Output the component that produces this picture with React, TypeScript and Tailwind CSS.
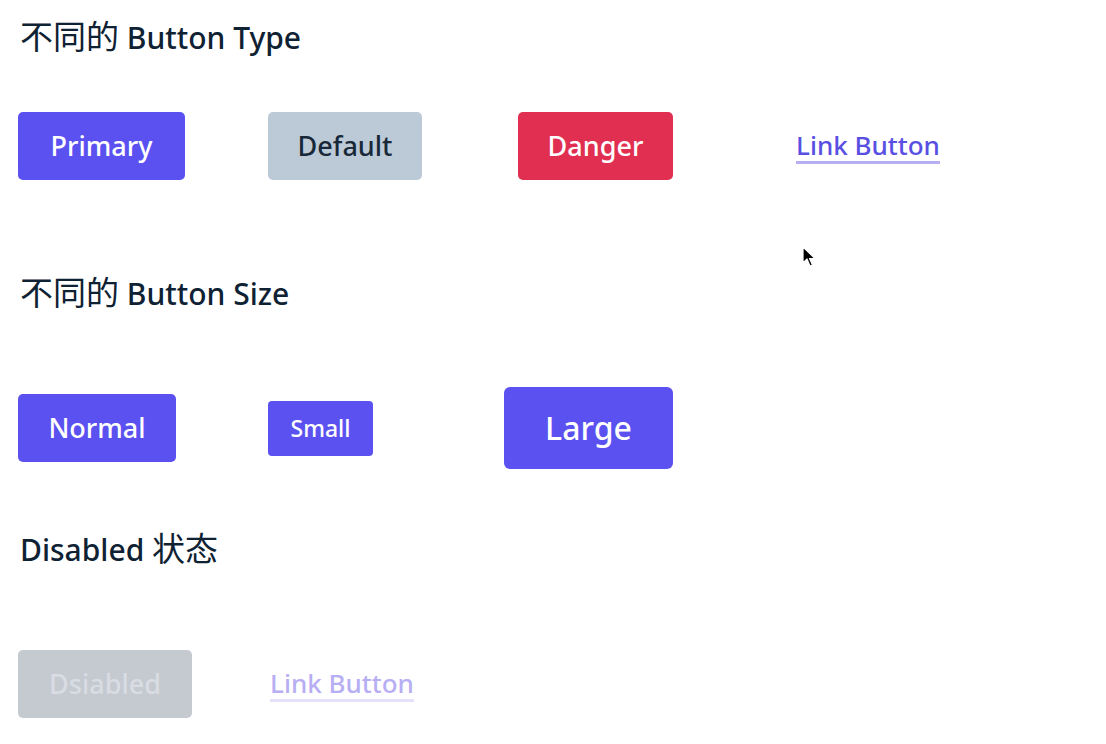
import React from 'react'

const font = { fontFamily: '"Noto Sans", "Noto Sans CJK SC", sans-serif' }

function Heading({ children }: { children: React.ReactNode }) {
  return <h2 className="text-[30px] leading-[36px] font-medium text-[#0f2233] pl-[20px]">{children}</h2>
}

// CJK glyphs render a bit wider in the reference
function Zh({ children }: { children: React.ReactNode }) {
  return <span className="text-[33px] leading-none font-normal">{children}</span>
}

export default function App() {
  return (
    <div style={font} className="relative w-[1106px] h-[744px] bg-white overflow-hidden">
      <div className="pt-[20px]">
        <Heading><Zh>不同的</Zh> Button Type</Heading>

        <div className="flex items-center mt-[56px] pl-[18px] h-[68px]">
          <div className="w-[250px]">
            <button className="w-[167px] h-[68px] rounded-[5px] bg-[#5b51f1] text-white text-[27px] font-medium">Primary</button>
          </div>
          <div className="w-[250px]">
            <button className="w-[154px] h-[68px] rounded-[5px] bg-[#bccad7] text-[#182838] text-[27px] font-medium">Default</button>
          </div>
          <div className="w-[250px]">
            <button className="w-[155px] h-[68px] rounded-[5px] bg-[#e02f51] text-white text-[27px] font-medium">Danger</button>
          </div>
          <div className="w-[250px] pl-[28px]">
            <a className="inline-block text-[26px] font-medium text-[#5a4fe3] leading-[31px] pt-[2px] border-b-[3px] border-[#b5aef2]">Link Button</a>
          </div>
        </div>

        <div className="mt-[96px]">
          <Heading><Zh>不同的</Zh> Button Size</Heading>
        </div>

        <div className="flex items-center mt-[75px] pl-[18px] h-[82px]">
          <div className="w-[250px]">
            <button className="w-[158px] h-[68px] rounded-[5px] bg-[#5b51f1] text-white text-[27px] font-medium">Normal</button>
          </div>
          <div className="w-[236px]">
            <button className="w-[105px] h-[55px] rounded-[4px] bg-[#5b51f1] text-white text-[23px] font-medium">Small</button>
          </div>
          <div>
            <button className="w-[169px] h-[82px] rounded-[6px] bg-[#5b51f1] text-white text-[32px] font-medium">Large</button>
          </div>
        </div>

        <div className="mt-[63px]">
          <Heading>Disabled <Zh>状态</Zh></Heading>
        </div>

        <div className="flex items-center mt-[82px] pl-[18px] h-[68px]">
          <div className="w-[250px]">
            <button disabled className="w-[174px] h-[68px] rounded-[5px] bg-[#c5c9d0] text-[#d9dde3] text-[27px] font-medium cursor-not-allowed">Dsiabled</button>
          </div>
          <div className="pl-[2px]">
            <a className="inline-block text-[26px] font-medium text-[#b7aef3] leading-[31px] pt-[2px] border-b-[3px] border-[#e6e1fa]">Link Button</a>
          </div>
        </div>
      </div>

      <svg className="absolute left-[802px] top-[246px]" width="14" height="22" viewBox="0 0 14 22">
        <path d="M1 1 L1 17 L5 13 L8 20 L10.5 19 L7.5 12.5 L13 12.5 Z" fill="#000" stroke="#fff" strokeWidth="1.2" strokeLinejoin="round" />
      </svg>
    </div>
  )
}
